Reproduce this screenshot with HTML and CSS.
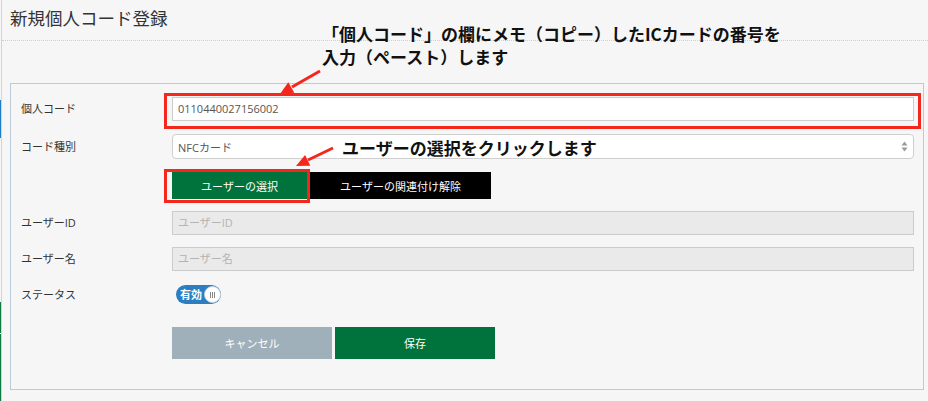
FILE: index.html
```html
<!DOCTYPE html>
<html lang="ja">
<head>
    <meta charset="UTF-8">
    <title>新規個人コード登録</title>
    <link rel="stylesheet" href="styles.css">
</head>
<body>
<div class="page">
    <div class="edge">
        <span class="edge-gap gap-top"></span>
        <span class="edge-blue"></span>
        <span class="edge-gap gap-mid"></span>
        <span class="edge-green green-a"></span>
        <span class="edge-cut"></span>
        <span class="edge-green green-b"></span>
    </div>

    <main class="main">
        <h1 class="title">新規個人コード登録</h1>

        <div class="panel">
            <div class="row row-code">
                <label class="label">個人コード</label>
                <div class="field">
                    <div class="input">0110440027156002</div>
                </div>
            </div>
            <div class="row row-type">
                <label class="label">コード種別</label>
                <div class="field">
                    <div class="select">
                        <span>NFCカード</span>
                        <svg class="select-arrow" width="7" height="11" viewBox="0 0 7 11">
                            <path d="M3.5 0.5 L6.5 4.5 L0.5 4.5 Z" fill="#9a9a9a"/>
                            <path d="M3.5 10.5 L6.5 6.5 L0.5 6.5 Z" fill="#9a9a9a"/>
                        </svg>
                    </div>
                </div>
            </div>
            <div class="row row-actions">
                <span class="label"></span>
                <div class="field btns">
                    <button class="btn btn-green btn-select">ユーザーの選択</button>
                    <button class="btn btn-black">ユーザーの関連付け解除</button>
                </div>
            </div>
            <div class="row row-user">
                <label class="label">ユーザーID</label>
                <div class="field">
                    <div class="input input-off">ユーザーID</div>
                </div>
            </div>
            <div class="row row-user">
                <label class="label">ユーザー名</label>
                <div class="field">
                    <div class="input input-off">ユーザー名</div>
                </div>
            </div>
            <div class="row row-status">
                <label class="label">ステータス</label>
                <div class="field">
                    <div class="toggle">
                        <span class="toggle-text">有効</span>
                        <span class="knob"><i></i><i></i><i></i></span>
                    </div>
                </div>
            </div>
            <div class="row row-submit">
                <span class="label"></span>
                <div class="field btns">
                    <button class="btn btn-grey btn-wide">キャンセル</button>
                    <button class="btn btn-green btn-wide">保存</button>
                </div>
            </div>
        </div>
    </main>

    <!-- 注釈 -->
    <div class="note note-paste">「個人コード」の欄にメモ（コピー）したICカードの番号を</div>
    <div class="note note-paste2">入力（ペースト）します</div>
    <div class="note note-click">ユーザーの選択をクリックします</div>
    <svg class="marks" width="928" height="401" viewBox="0 0 928 401">
        <rect x="165.5" y="94.5" width="754" height="33" fill="none" stroke="#f5261c" stroke-width="3"/>
        <rect x="165.5" y="170.5" width="143" height="31" fill="none" stroke="#f5261c" stroke-width="3"/>
        <line x1="320" y1="71" x2="292" y2="87" stroke="#f5261c" stroke-width="3"/>
        <polygon points="280,94 294.3,92.7 288.3,82.3" fill="#f5261c"/>
        <line x1="333" y1="148" x2="308" y2="160" stroke="#f5261c" stroke-width="3"/>
        <polygon points="296,166 310.3,165.7 305.1,154.9" fill="#f5261c"/>
    </svg>
</div>
</body>
</html>
```

FILE: styles.css
```css
body {
    margin: 0;
    background-color: #f6f6f6;
    font-family: "Open Sans", "Noto Sans CJK JP", sans-serif;
    color: #333;
}

.page {
    position: relative;
    display: flex;
    width: 928px;
    height: 401px;
    overflow: hidden;
}

/* 左端のサイドバーの縁 */
.edge {
    display: flex;
    flex-direction: column;
    width: 1px;
    border-right: 1px solid #d4d4d4;
}

.edge span {
    display: block;
}

.gap-top {
    height: 100px;
}

.edge-blue {
    height: 38px;
    background-color: #1f7fc6;
}

.gap-mid {
    height: 164px;
}

.edge-green {
    background-color: #0b7a43;
}

.green-a {
    height: 31px;
}

.edge-cut {
    height: 1px;
    background-color: #ffffff;
}

.green-b {
    flex: 1;
}

.main {
    flex: 1;
}

.title {
    margin: 0;
    height: 40px;
    padding-left: 8px;
    border-bottom: 1px dotted #cfcfcf;
    font-size: 17.5px;
    font-weight: normal;
    line-height: 37px;
    color: #333;
}

.panel {
    margin: 42px 4px 0 8px;
    padding: 13px 9px 30px 10px;
    border: 1px solid #b9cbda;
}

.row {
    display: flex;
    align-items: center;
}

.label {
    width: 151px;
    flex-shrink: 0;
    font-size: 11px;
    line-height: 16px;
    color: #333;
}

.field {
    flex: 1;
    display: flex;
    flex-direction: column;
}

.row-type {
    margin-top: 13px;
}

.row-actions {
    margin-top: 13px;
}

.row-user {
    margin-top: 12px;
}

.row-status {
    margin-top: 14px;
}

.row-submit {
    margin-top: 23px;
}

.input {
    height: 22px;
    padding-left: 5px;
    border: 1px solid #cccccc;
    background-color: #ffffff;
    font-size: 11px;
    line-height: 22px;
    color: #555;
}

.input-off {
    background-color: #eaeaea;
    color: #b3b3b3;
}

.select {
    display: flex;
    align-items: center;
    justify-content: space-between;
    height: 23px;
    padding: 0 5px 0 5px;
    border: 1px solid #cfcfcf;
    border-radius: 4px;
    background-color: #ffffff;
    font-size: 11px;
    color: #555;
}

.btns {
    flex-direction: row;
    gap: 3px;
}

.btn {
    border: none;
    padding: 0;
    font-family: "Open Sans", "Noto Sans CJK JP", sans-serif;
    font-size: 11px;
    color: #ffffff;
    cursor: pointer;
}

.btn-select {
    width: 135px;
    height: 27px;
}

.btn-black {
    width: 181px;
    height: 27px;
    background-color: #000000;
}

.btn-green {
    background-color: #00733c;
}

.btn-grey {
    background-color: #9fb0ba;
}

.btn-wide {
    width: 160px;
    height: 32px;
}

.toggle {
    display: flex;
    align-items: center;
    margin-left: 4px;
    width: 45px;
    height: 19px;
    border-radius: 10px;
    background-color: #2b7fc1;
}

.toggle-text {
    margin-left: 4px;
    font-size: 11px;
    font-weight: bold;
    color: #ffffff;
    line-height: 18px;
}

.knob {
    display: flex;
    align-items: center;
    justify-content: center;
    gap: 1px;
    margin-left: 2px;
    width: 17px;
    height: 17px;
    border-radius: 50%;
    border: 1px solid #d0d0d0;
    box-sizing: border-box;
    background-color: #ffffff;
}

.knob i {
    display: block;
    width: 1px;
    height: 6px;
    background-color: #888;
}

.note {
    position: absolute;
    left: 322px;
    font-family: "Noto Sans CJK JP", sans-serif;
    font-size: 17px;
    font-weight: bold;
    line-height: 21px;
    color: #111;
    white-space: nowrap;
}

.note-paste {
    top: 23px;
}

.note-paste2 {
    top: 46px;
}

.note-click {
    left: 342px;
    top: 137px;
}

.marks {
    position: absolute;
    left: 0;
    top: 0;
    pointer-events: none;
}
```
